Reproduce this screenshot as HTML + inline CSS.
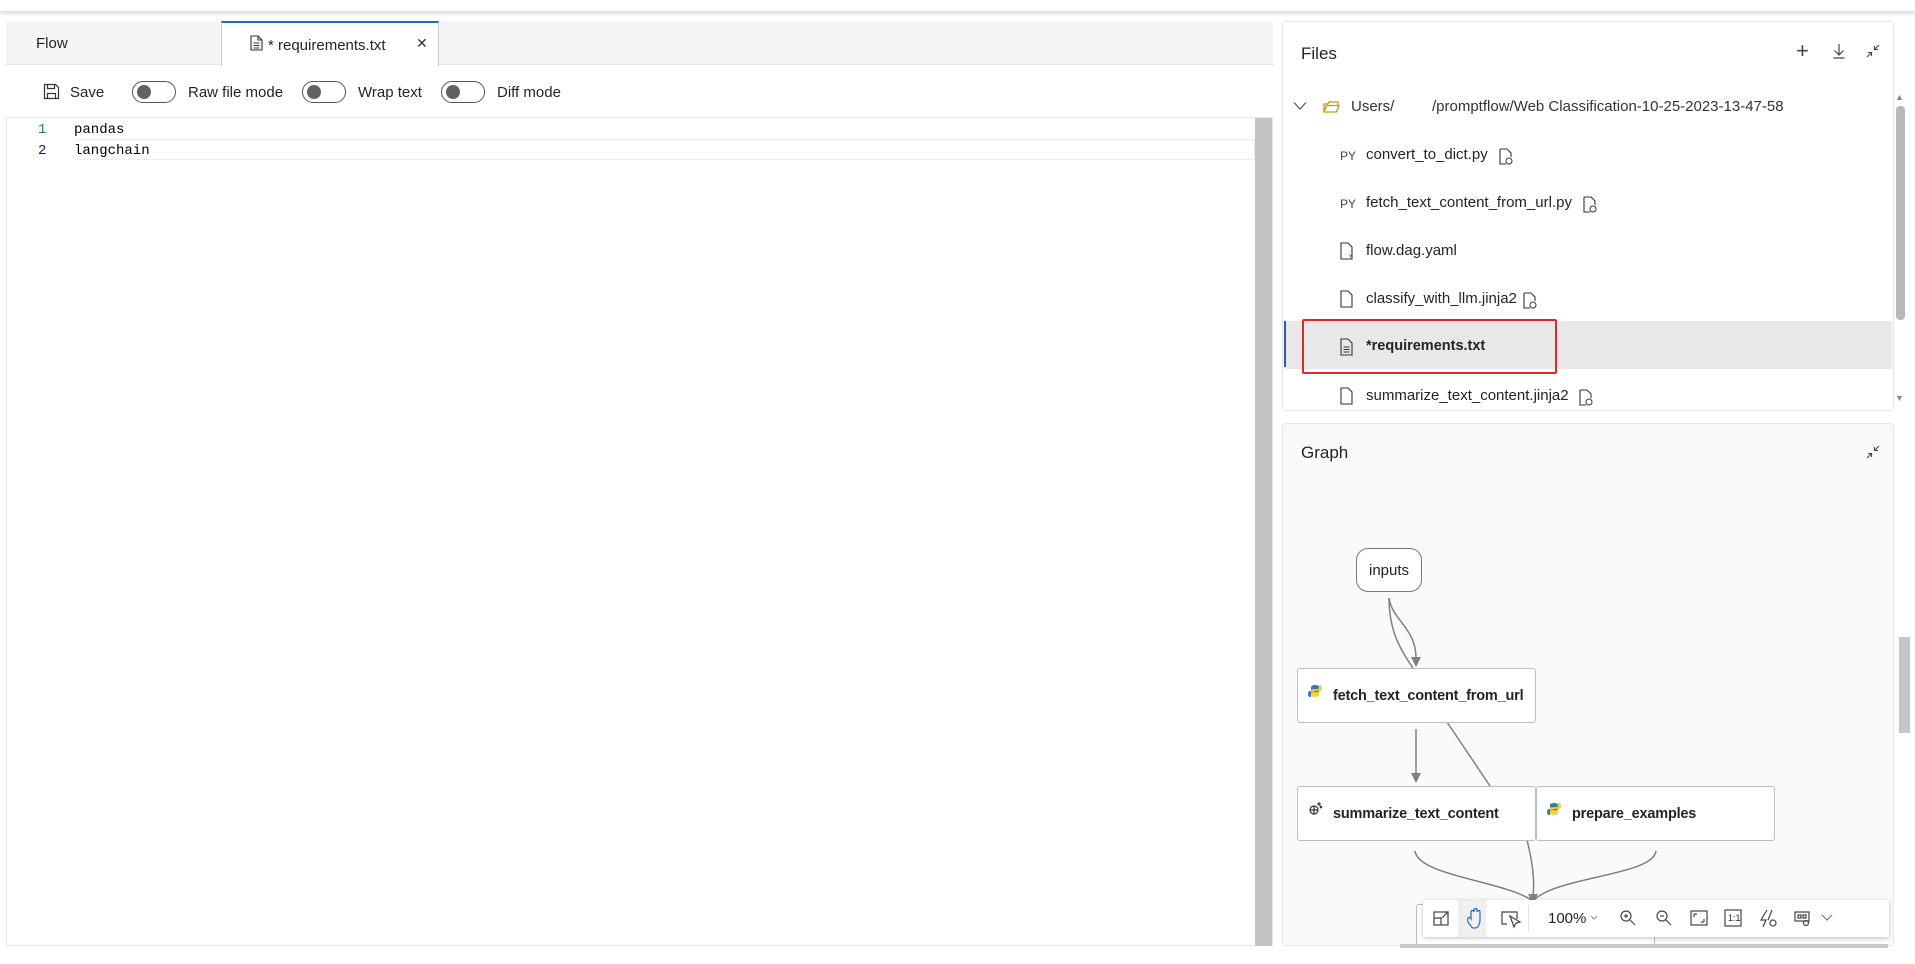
<!DOCTYPE html>
<html><head><style>
*{box-sizing:border-box;margin:0;padding:0}
body{width:1915px;height:964px;background:#fff;position:relative;overflow:hidden;font-family:"Liberation Sans",sans-serif;color:#242424}
.a{position:absolute}
.t{font-size:15px;white-space:nowrap}
.tog{position:absolute;width:44px;height:22px;border:1px solid #555;border-radius:11px;top:81px}
.tog:after{content:"";position:absolute;left:4px;top:3px;width:14px;height:14px;border-radius:50%;background:#616161}
.node{position:absolute;background:#fff;border:1px solid #bdbdbd;border-radius:3px;font-size:14.5px;font-weight:bold;display:flex;align-items:center;padding-left:35px;white-space:nowrap;letter-spacing:-0.2px}
.py{position:absolute;left:10px;top:15px;width:14px;height:14px}
</style></head><body>
<div class="a" style="left:0;top:0;width:1915px;height:12px;background:#fff;border-bottom:1px solid #e0e0e0;box-shadow:0 2px 3px rgba(0,0,0,.12)"></div>
<!-- left panel -->
<div class="a" style="left:6px;top:21px;width:1267px;height:925px;background:#fffffd;border:1px solid #e8e8e8"></div>
<div class="a" style="left:6px;top:21px;width:1267px;height:44px;background:#f5f5f5;border-bottom:1px solid #e5e5e5"></div>
<div class="a t" style="left:36px;top:35px">Flow</div>
<div class="a" style="left:221px;top:21px;width:218px;height:45px;background:#fff;border-top:2px solid #1f6bc4;border-left:1px solid #ccc;border-right:1px solid #ccc"></div>
<svg class="a" style="left:250px;top:35px" width="13" height="16" viewBox="0 0 13 16"><path d="M1 1h7l4 4v10H1z M8 1v4h4 M3.5 8h6 M3.5 10.5h6 M3.5 13h6" fill="none" stroke="#333" stroke-width="1.1"/></svg>
<div class="a t" style="left:268px;top:37px">* requirements.txt</div>
<div class="a" style="left:416px;top:35px;font-size:14px;color:#333">✕</div>
<div class="a" style="left:6px;top:66px;width:1267px;height:52px;background:#fff;border-bottom:1px solid #e5e5e5"></div>
<svg class="a" style="left:43px;top:83px" width="17" height="17" viewBox="0 0 17 17"><path d="M1.5 1.5h11l3 3v11h-14z M4.5 1.5v4h7v-4 M4.5 15.5v-5h8v5" fill="none" stroke="#333" stroke-width="1.2"/></svg>
<div class="a t" style="left:70px;top:84px">Save</div>
<div class="tog" style="left:132px"></div><div class="a t" style="left:188px;top:84px">Raw file mode</div>
<div class="tog" style="left:302px"></div><div class="a t" style="left:358px;top:84px">Wrap text</div>
<div class="tog" style="left:441px"></div><div class="a t" style="left:497px;top:84px">Diff mode</div>
<div class="a" style="left:74px;top:139px;width:1181px;height:21px;border:1px solid #ececec;border-left:none"></div>
<div class="a" style="left:38px;top:120px;font-family:'Liberation Mono',monospace;font-size:14px;line-height:21px;color:#237893">1<br><span style="color:#0b216f">2</span></div>
<div class="a" style="left:74px;top:120px;font-family:'Liberation Mono',monospace;font-size:14px;line-height:21px;color:#000">pandas<br>langchain</div>
<div class="a" style="left:1255px;top:118px;width:17px;height:828px;background:#c2c2c2"></div>
<!-- files panel -->
<div class="a" style="left:1282px;top:21px;width:612px;height:390px;background:#fff;border:1px solid #e3e3e3;border-radius:4px"></div>
<div class="a" style="left:1301px;top:44px;font-size:17px">Files</div>
<div class="a" style="left:1796px;top:38px;font-size:22px;color:#444">+</div>
<svg class="a" style="left:1832px;top:43px" width="14" height="16"><path d="M7 1v11M2.5 7.5 7 12l4.5-4.5M1.5 15h11" fill="none" stroke="#444" stroke-width="1.2"/></svg>
<svg class="a" style="left:1866px;top:44px" width="14" height="14"><path d="M13 1 8.5 5.5M8.5 2v3.5H12M1 13l4.5-4.5M5.5 12V8.5H2" fill="none" stroke="#444" stroke-width="1.1"/></svg>
<svg class="a" style="left:1293px;top:101px" width="14" height="10"><path d="M1 1.5 7 8l6-6.5" fill="none" stroke="#555" stroke-width="1.2"/></svg>
<svg class="a" style="left:1323px;top:99px" width="17" height="15"><path d="M1 13V5h4l1-2h9v3M1 13l2.5-6.5H16L13.5 13z" fill="none" stroke="#c39a12" stroke-width="1.3"/></svg>
<div class="a t" style="left:1351px;top:98px;color:#333">Users/</div>
<div class="a t" style="left:1432px;top:98px;color:#333">/promptflow/Web Classification-10-25-2023-13-47-58</div>
<div class="a" style="left:1285px;top:321px;width:607px;height:48px;background:#e8e8e8"></div>
<div class="a" style="left:1284px;top:321px;width:2px;height:46px;background:#2a5ab8"></div>
<div class="a" style="left:1302px;top:319px;width:255px;height:55px;border:2px solid #e02a2a;border-radius:2px"></div>
<div class="a" style="left:1340px;top:149px;font-size:12px;color:#444">PY</div>
<div class="a t" style="left:1366px;top:146px">convert_to_dict.py</div>
<div class="a" style="left:1340px;top:197px;font-size:12px;color:#444">PY</div>
<div class="a t" style="left:1366px;top:194px">fetch_text_content_from_url.py</div>
<div class="a t" style="left:1366px;top:242px">flow.dag.yaml</div>
<div class="a t" style="left:1366px;top:290px">classify_with_llm.jinja2</div>
<div class="a t" style="left:1366px;top:338px;font-weight:bold;font-size:14.5px">*requirements.txt</div>
<div class="a t" style="left:1366px;top:387px">summarize_text_content.jinja2</div>
<svg class="a" style="left:1340px;top:242px" width="14" height="18"><path d="M1 1h7l4 4v12H1z" fill="none" stroke="#333" stroke-width="1.1"/><text x="9" y="16" font-size="5" fill="#333">Y</text></svg>
<svg class="a" style="left:1340px;top:290px" width="14" height="18"><path d="M1 1h7l4 4v12H1z" fill="none" stroke="#333" stroke-width="1.1"/></svg>
<svg class="a" style="left:1340px;top:338px" width="14" height="18"><path d="M1 1h7l4 4v12H1z M3.5 9h6M3.5 11.5h6M3.5 14h6" fill="none" stroke="#333" stroke-width="1.1"/></svg>
<svg class="a" style="left:1340px;top:387px" width="14" height="18"><path d="M1 1h7l4 4v12H1z" fill="none" stroke="#333" stroke-width="1.1"/></svg>
<svg class="a" width="20" height="20" style="left:1498px;top:148px"><path d="M2 1h7l4 4v4M2 1v15h6" fill="none" stroke="#333" stroke-width="1.1"/><circle cx="11" cy="13" r="3" fill="none" stroke="#333"/></svg>
<svg class="a" width="20" height="20" style="left:1582px;top:196px"><path d="M2 1h7l4 4v4M2 1v15h6" fill="none" stroke="#333" stroke-width="1.1"/><circle cx="11" cy="13" r="3" fill="none" stroke="#333"/></svg>
<svg class="a" width="20" height="20" style="left:1522px;top:292px"><path d="M2 1h7l4 4v4M2 1v15h6" fill="none" stroke="#333" stroke-width="1.1"/><circle cx="11" cy="13" r="3" fill="none" stroke="#333"/></svg>
<svg class="a" width="20" height="20" style="left:1578px;top:389px"><path d="M2 1h7l4 4v4M2 1v15h6" fill="none" stroke="#333" stroke-width="1.1"/><circle cx="11" cy="13" r="3" fill="none" stroke="#333"/></svg>
<div class="a" style="left:1895px;top:92px;font-size:9px;color:#888">▲</div>
<div class="a" style="left:1896px;top:106px;width:9px;height:214px;background:#b8b8b8;border-radius:4px"></div>
<div class="a" style="left:1895px;top:393px;font-size:9px;color:#888">▼</div>
<!-- graph panel -->
<div class="a" style="left:1282px;top:423px;width:612px;height:523px;background:#fafafa;border:1px solid #e8e8e8;border-radius:4px"></div>
<div class="a" style="left:1301px;top:443px;font-size:17px">Graph</div>
<svg class="a" style="left:1866px;top:445px" width="14" height="14"><path d="M13 1 8.5 5.5M8.5 2v3.5H12M1 13l4.5-4.5M5.5 12V8.5H2" fill="none" stroke="#444" stroke-width="1.1"/></svg>
<div class="a" style="left:1899px;top:637px;width:11px;height:96px;background:#c6c6c6"></div>
<svg class="a" style="left:1282px;top:423px" width="612" height="523" fill="none" stroke="#808080" stroke-width="1.5">
<path d="M107 175c0 25 6 45 24 70M107 175c3 22 27 30 27 60"/><path d="M129 234l5 10 5-10z" fill="#808080" stroke="none"/>
<path d="M134 306v45"/><path d="M129 350l5 10 5-10z" fill="#808080" stroke="none"/>
<path d="M165 299l43 64"/>
<path d="M133 428c3 25 90 30 118 50M374 428c-3 25-100 25-123 50M245 417c5 20 8 40 6 55"/><path d="M246 471l5 10 5-10z" fill="#808080" stroke="none"/>
</svg>
<div class="a" style="left:1356px;top:548px;width:66px;height:44px;border:1.5px solid #777;border-radius:12px;background:#fff;font-size:15px;display:flex;align-items:center;justify-content:center">inputs</div>
<div class="node" style="left:1297px;top:668px;width:239px;height:55px"><svg class="py" viewBox="0 0 14 14"><path d="M7 1C3 1 3 3 3 3v3h5v1H2S0 7 0 10s2 3 2 3h1v-2s0-2 2-2h4s2 0 2-2V3S11 1 7 1z" fill="#3b77b0"/><path d="M7 13c4 0 4-2 4-2V8H6V7h6s2 0 2-3-2-3-2-3h-1v2s0 2-2 2H5S3 5 3 7v4s0 2 4 2z" fill="#f2cc2c" opacity=".9"/></svg>fetch_text_content_from_url</div>
<div class="node" style="left:1297px;top:786px;width:239px;height:55px"><svg class="py" viewBox="0 0 14 14" fill="none" stroke="#333" stroke-width="1.2"><circle cx="6" cy="8" r="4"/><path d="M2 8h8M6 4v8"/><circle cx="11" cy="2" r="1"/><circle cx="13" cy="5" r=".8"/></svg>summarize_text_content</div>
<div class="node" style="left:1536px;top:786px;width:239px;height:55px"><svg class="py" viewBox="0 0 14 14"><path d="M7 1C3 1 3 3 3 3v3h5v1H2S0 7 0 10s2 3 2 3h1v-2s0-2 2-2h4s2 0 2-2V3S11 1 7 1z" fill="#3b77b0"/><path d="M7 13c4 0 4-2 4-2V8H6V7h6s2 0 2-3-2-3-2-3h-1v2s0 2-2 2H5S3 5 3 7v4s0 2 4 2z" fill="#f2cc2c" opacity=".9"/></svg>prepare_examples</div>
<div class="a" style="left:1416px;top:904px;width:239px;height:42px;background:#fff;border:1px solid #bdbdbd;border-radius:3px"></div>
<div class="a" style="left:1400px;top:944px;width:488px;height:4px;background:#c8c8c8"></div>
<div class="a" style="left:1423px;top:900px;width:466px;height:37px;background:#fff;box-shadow:0 1px 4px rgba(0,0,0,.25);border-radius:2px"></div>
<div class="a" style="left:1458px;top:900px;width:28px;height:37px;background:#f0f0f0"></div>
<svg class="a" style="left:1423px;top:900px" width="466" height="37" fill="none" stroke="#444" stroke-width="1.2">
<rect x="11" y="12" width="14" height="13"/><path d="M11 18h7v7M19 18l6-6M21 12h4v4"/>
<path d="M48 26c-3-3-4-6-3-8s3 1 3 1v-7c0-2 3-2 3 0v-2c0-2 3-2 3 0v2c0-2 3-2 3 0v8c0 4-2 8-5 8s-3 0-4-2z" stroke="#2a66c8"/>
<path d="M84 24h-5V12h15v7M87 16l4 11 2-4 4-1z"/>
<circle cx="203" cy="16" r="5"/><path d="M207 20l5 5M201 16h4M203 14v4"/>
<circle cx="239" cy="16" r="5"/><path d="M243 20l5 5M237 16h4"/>
<rect x="268" y="11" width="16" height="14"/><path d="M271 14h3M271 14v3M281 22h-3M281 22v-3"/>
<rect x="302" y="10" width="16" height="16"/>
<path d="M344 10l-6 10h5l-3 7M345 20l4-10"/><circle cx="350" cy="23" r="3"/>
<rect x="372" y="12" width="14" height="9"/><path d="M375 15h3v3h-3zM380 15h3v3h-3z"/><circle cx="383" cy="23" r="2.5"/>
<path d="M399 15l5 5 5-5" stroke="#777"/>
<path d="M168 16l3 3 3-3" stroke="#999"/>
</svg>
<div class="a" style="left:1528px;top:905px;width:1px;height:27px;background:#e0e0e0"></div>
<div class="a" style="left:1548px;top:910px;font-size:15px">100%</div>
<div class="a" style="left:1728px;top:913px;font-size:9px">1:1</div>
</body></html>
